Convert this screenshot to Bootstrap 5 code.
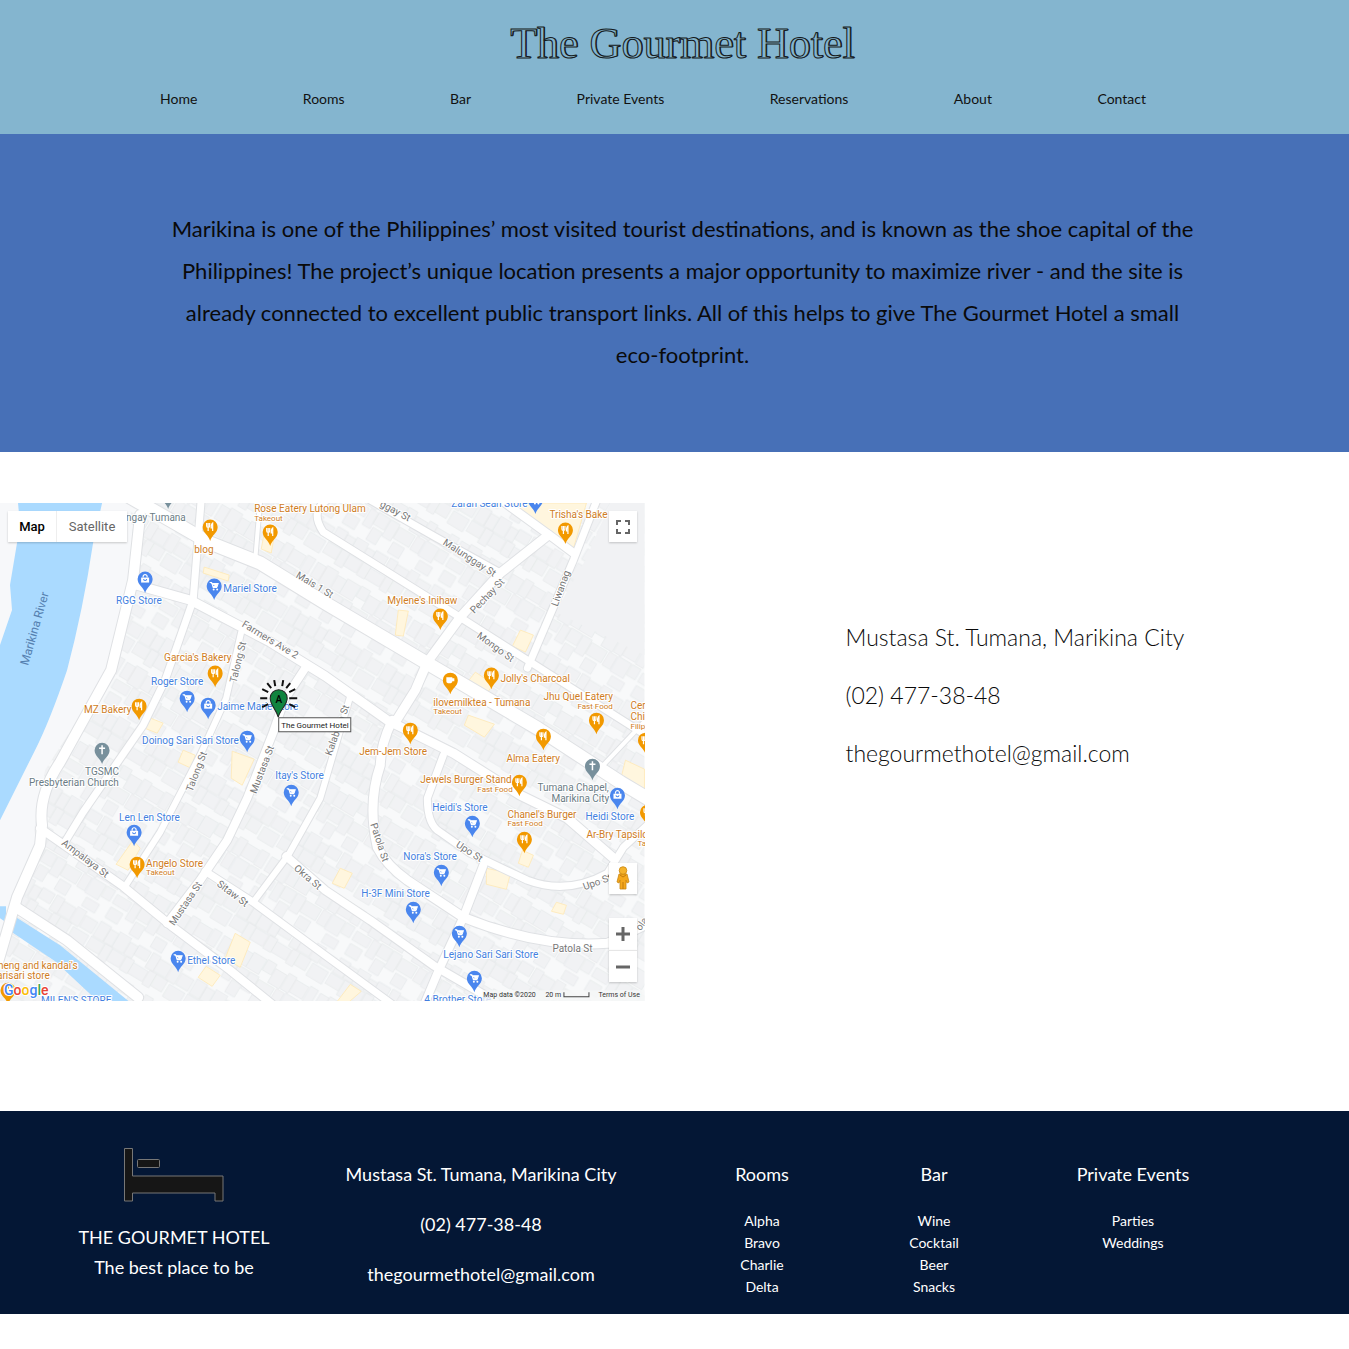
<!DOCTYPE html>
<html lang="en">
<head>
<meta charset="utf-8">
<meta name="viewport" content="width=device-width, initial-scale=1">
<title>The Gourmet Hotel - About</title>
<link href="https://cdn.jsdelivr.net/npm/bootstrap@5.3.0/dist/css/bootstrap.min.css" rel="stylesheet">
<style>
  body { font-family: Lato, "Open Sans", sans-serif; color: #0a0a0a; background: #fff; }
  .site-head { background: #84b5cf; height: 134px; padding-top: 16px; }
  .brand-title { font-family: "Liberation Serif", serif; font-size: 44px; line-height: 56px; color: #84b5cf; -webkit-text-stroke: 1px #151a20; text-shadow: 1px 0 #111; padding-left: 16px; }
  .main-nav { padding: 16px 203px 0 160px; }
  .main-nav a { color: #111; font-size: 14px; line-height: 22px; text-decoration: none; white-space: nowrap; }
  .intro { background: #4770b7; padding: 74px 144px 76px 160px; font-size: 22px; line-height: 42px; }
  .visit { padding: 51px 0 110px; }
  .map-side { padding-right: 30px; }
  .contact-side { padding: 113px 0 0 171px; font-size: 23px; line-height: 42px; font-weight: 300; }
  .contact-side a, .foot a { color: inherit; text-decoration: none; }
  .map-box > svg { display: block; width: 100%; height: auto; }
  .map-btn { position: absolute; display: flex; align-items: center; justify-content: center; background: #fff; border: 0; padding: 0; color: #666; box-shadow: 0 1px 2px rgba(0,0,0,.2); }
  .map-btn svg { width: 16px; height: 16px; }
  .map-types { position: absolute; left: 8px; top: 8px; display: flex; box-shadow: 0 1px 2px rgba(0,0,0,.2); }
  .map-types button { border: 0; background: #fff; height: 31px; font: 13px Roboto, sans-serif; color: #666; padding: 0; width: 70px; }
  .map-types button:first-child { width: 49px; font-weight: 500; color: #000; border-right: 1px solid #eee; }
  .btn-full { right: 8px; top: 8px; width: 28px; height: 31px; }
  .btn-man { right: 8px; bottom: 107px; width: 28px; height: 31px; }
  .map-btn.btn-man svg { width: 14px; height: 25px; }
  .btn-in { right: 8px; bottom: 51px; width: 28px; height: 32px; }
  .btn-out { right: 8px; bottom: 19px; width: 28px; height: 32px; border-top: 1px solid #e6e6e6; }
  .foot { background: #041735; color: #fff; height: 203px; padding: 37px 72px 0 31px; display: grid; grid-template-columns: 286fr 328fr 234fr 110fr 288fr; text-align: center; white-space: nowrap; font-size: 18px; line-height: 30px; font-weight: 400; }
  .foot .bed { width: 100px; height: 54px; display: block; margin: 0 auto 20px; }
  .foot h2 { font-size: 18px; line-height: 30px; font-weight: 400; margin: 0 0 21px; }
  .foot ul { font-size: 14px; line-height: 22px; }
  .foot-col { padding-top: 11px; }
  .foot-col p { margin: 0 0 20px; }
  .roads { fill: none; stroke-linejoin: round; stroke-linecap: round; }
  .r-edge { stroke: #dfe1e4; } .r-fill { stroke: #fff; }
  .lbl { font-family: Roboto, sans-serif; font-size: 10px; paint-order: stroke; stroke: #fff; stroke-width: 2px; stroke-linejoin: round; }
  .lbl .tiny { font-size: 8px; }
  .or { fill: #cf7d24; } .bl { fill: #447fe0; } .gy { fill: #6b7c85; } .st { fill: #777; }
  @media (max-width: 767px) {
    .foot { display: block; height: auto; padding: 24px; }
    .site-head { height: auto; } .main-nav { flex-wrap: wrap; gap: 12px; padding: 16px; }
    .intro, .contact-side { padding: 24px; } .map-side { padding-right: 0; }
  }
</style>
<script src="https://cdn.jsdelivr.net/npm/bootstrap@5.3.0/dist/js/bootstrap.bundle.min.js"></script>
</head>
<body>
<header class="site-head">
  <h1 class="brand-title text-center fw-normal m-0">The Gourmet Hotel</h1>
  <nav class="main-nav d-flex justify-content-between" aria-label="Main">
    <a href="#">Home</a><a href="#">Rooms</a><a href="#">Bar</a><a href="#">Private Events</a><a href="#">Reservations</a><a href="#">About</a><a href="#">Contact</a>
  </nav>
</header>
<main>
  <section class="intro text-center"><p class="m-0">Marikina is one of the Philippines’ most visited tourist destinations, and is known as the shoe capital of the Philippines! The project’s unique location presents a major opportunity to maximize river - and the site is already connected to excellent public transport links. All of this helps to give The Gourmet Hotel a small <span class="text-nowrap">eco-footprint.</span></p></section>
  <section class="visit row g-0">
    <div class="col-md-6 map-side">
      <div class="map-box position-relative">
        <svg viewBox="0 503 644 498" role="img" aria-label="Map around The Gourmet Hotel">
          <defs>
            <pattern id="lots" width="112" height="92" patternUnits="userSpaceOnUse" patternTransform="rotate(31)">
              <rect width="112" height="92" fill="#f8f9fa"/>
              <path d="M1 1h12v17H1zM13 3h10v15H13zM23 0h13v18H23zM37 4h9v14h-9zM46 2h14v11H46zM62 1h9v17h-9zM71 3h14v14H71zM86 0h10v18H86zM97 4h14v13H97zM0 19h16v12H0zM16 18h9v17h-9zM25 19h15v13H25zM41 18h9v15h-9zM50 20h17v12H50zM68 18h8v16h-8zM76 18h13v13H76zM92 20h18v14H92zM2 42h10v16H2zM12 40h13v20H12zM26 43h10v15H26zM36 41h15v17H36zM52 40h10v12H52zM63 44h13v16H63zM77 41h9v18h-9zM86 43h15v14H86zM102 41h9v17h-9zM1 62h17v10H1zM20 61h9v18h-9zM29 60h13v13H29zM43 60h10v19H43zM54 62h18v13H54zM74 61h9v15h-9zM84 60h15v17H84zM100 60h10v12h-10zM2 76h14v12H2zM31 76h11v14H31zM56 78h13v12H56zM88 80h15v10H88z" fill="#f1f2f4" stroke="#e7e9eb" stroke-width=".7"/>
            </pattern>
            <g id="drop"><path d="M0 14C-1.500 8-7.500 6-7.500 0a7.500 7.500 0 1 1 15 0C7.500 6 1.500 8 0 14z"/></g>
            <g id="food"><use href="#drop" fill="#f29900"/><path d="M-3.500-4v3q0 1.500 1.500 1.500T-.500-1v-3M-2-4v8M2.500 4v-8q-1.500 1-1.500 5h1.500" fill="none" stroke="#fff" stroke-width="1.200"/></g>
            <g id="cart"><use href="#drop" fill="#4a86ee"/><path d="M-4.500-3.500h2l1.500 5h4M-2-2.500h6l-1 3h-4z" fill="#fff" stroke="#fff"/><circle cx="-.5" cy="3.500" r="1" fill="#fff"/><circle cx="3" cy="3.500" r="1" fill="#fff"/></g>
            <g id="bag"><use href="#drop" fill="#4a86ee"/><path d="M-4-1.500h8v5h-8z" fill="#fff"/><path d="M-2-1.500v-1a2 2 0 0 1 4 0v1" fill="none" stroke="#fff" stroke-width="1.200"/><path d="M-1.500 0a1.500 1.500 0 0 0 3 0" fill="none" stroke="#4a86ee"/></g>
            <g id="cross"><use href="#drop" fill="#78909c"/><path d="M0-5v9M-3-2h6" stroke="#fff" stroke-width="1.500"/></g>
            <g id="net">
              <path d="M128 496L210 543 260 563 325 603 430 665 537 728 620 782 650 800" stroke-width="15"/>
              <path d="M133 584L190 600 270 642 325 676 387 720 453 753 520 795 567 818 612 857" stroke-width="11"/>
              <path d="M140 515L133 580 111 670 60 762Q38 795 42 825L40 845 17 897-2 962" stroke-width="12"/>
              <path d="M201 500L193 600 165 680 143 725 83 812 66 840" stroke-width="9"/>
              <path d="M40 828L123 886 173 927 230 970 272 1004" stroke-width="10"/>
              <path d="M241 632L226 698 200 755 160 832 125 886" stroke-width="8"/>
              <path d="M305 668L284 700 273 732 247 798 227 840 200 880 167 923" stroke-width="10"/>
              <path d="M350 696L337 740 320 798 288 855 253 902" stroke-width="8"/>
              <path d="M205 871L253 902 325 955 392 1004" stroke-width="9"/>
              <path d="M286 856L325 890 370 920 433 965 495 1001" stroke-width="10"/>
              <path d="M392 720Q380 745 380 765Q367 803 377 847Q386 865 407 880L463 917Q540 948 607 943L650 922" stroke-width="11"/>
              <path d="M443 755L427 798Q427 825 440 832L470 853 527 880Q567 895 607 873L623 847 650 822" stroke-width="9"/>
              <path d="M548 535L500 573 460 617 427 662 415 690 395 722" stroke-width="11"/>
              <path d="M370 500L435 537 500 573" stroke-width="9"/>
              <path d="M498 498L553 538 573 553" stroke-width="10"/>
              <path d="M598 496L573 560 527 668" stroke-width="9"/>
              <path d="M330 498Q308 510 323 532L453 613 527 660 650 738" stroke-width="9"/>
              <path d="M483 865L463 917 437 973 424 1004" stroke-width="10"/>
              <path d="M16 907L67 940 138 997" stroke-width="12"/>
              <path d="M650 715L600 768M260 500l-5 60" stroke-width="6"/>
            </g>
          </defs>
          <rect y="503" width="644" height="498" fill="url(#lots)"/>
          <path d="M0 503H130L136 590 100 685 45 770 34 830 40 850 0 955z" fill="#f7f8fa"/>
          <path d="M585 560L610 503H644V655L555 612z" fill="#f1f2f4"/>
          <path d="M18 503H102L93 543Q83 610 67 670 50 720 35 750L0 820V645L12 610 10 585 20 525z" fill="#aadaff"/>
          <path d="M0 906h6v16l-6-4zM16 917L60 945 130 1002H99L55 961 12 932z" fill="#aadaff"/>
          <path d="M500 503h86l-14 49-40-25zM204 567l25 8-1 6-25-8zM265 528l10 3-4 22-10-4zM133 840l7 8-12 22-12-6zM232 751l22 8-12 26-11-7zM486 868l24 5-4 16-20-5zM235 933l15 9-10 25-15-9zM522 850l11 5-5 12-10-4zM398 610l10 1-5 25-8-1zM475 672l18 12-7 10-22-8zM625 760l19 9v24l-25-9zM340 868l12 5-8 15-12-5zM148 717l15 6-6 10-15-6zM183 750l12 5-4 13-13-6zM468 715l26 9-10 13-20-12zM350 984l11 7-14 12-10-2zM520 630l13 5-8 17-13-6zM556 902l10 3-3 9-12-3zM206 966l14 9-8 11-14-9z" fill="#fff6de" stroke="#ffe9b4" stroke-width=".8"/>
          <g class="roads r-edge"><use href="#net"/></g>
          <g class="roads r-fill" id="roadtop"></g>
          <g class="lbl st">
            <text transform="translate(28 666) rotate(-74)" style="fill:#5580b0;font-size:12px;stroke:none">Marikina River</text>
            <text transform="translate(295 577) rotate(31)">Mais 1 St</text><text transform="translate(241 626) rotate(31)">Farmers Ave 2</text>
            <text transform="translate(379 506) rotate(28)">ggay St</text><text transform="translate(442 544) rotate(33)">Malunggay St</text>
            <text transform="translate(474 614) rotate(-46)">Pechay St</text><text transform="translate(557 607) rotate(-70)">Liwanag</text><text transform="translate(476 637) rotate(36)">Mongo St</text>
            <text transform="translate(236 683) rotate(-76)">Talong St</text><text transform="translate(192 792) rotate(-69)">Talong St</text><text transform="translate(256 794) rotate(-69)">Mustasa St</text><text transform="translate(331 756) rotate(-70)">Kalabasa St</text>
            <text transform="translate(61 844) rotate(37)">Ampalaya St</text><text transform="translate(174 926) rotate(-56)">Mustasa St</text><text transform="translate(216 885) rotate(37)">Sitaw St</text><text transform="translate(293 869) rotate(40)">Okra St</text>
            <text transform="translate(370 824) rotate(72)">Patola St</text><text transform="translate(455 846) rotate(33)">Upo St</text><text transform="translate(584 890) rotate(-20)">Upo St</text><text x="552" y="952">Patola St</text><text transform="translate(640 931) rotate(-55)">ola</text>
          </g>
          <g class="lbl gy"><text x="126" y="521">ngay Tumana</text><text x="85" y="775">TGSMC</text><text x="29" y="786">Presbyterian Church</text><text x="537" y="791">Tumana Chapel,</text><text x="551" y="802">Marikina City</text></g>
          <g class="lbl or">
            <text x="254" y="512">Rose Eatery Lutong Ulam</text><text class="tiny" x="254" y="521">Takeout</text><text x="194" y="553">blog</text><text x="549" y="518">Trisha's Bake</text><text x="387" y="604">Mylene's Inihaw</text><text x="164" y="661">Garcia's Bakery</text><text x="84" y="713">MZ Bakery</text>
            <text x="500" y="682">Jolly's Charcoal</text><text x="433" y="706">ilovemilktea - Tumana</text><text class="tiny" x="433" y="714">Takeout</text><text x="543" y="700">Jhu Quel Eatery</text><text class="tiny" x="577" y="709">Fast Food</text><text x="630" y="709">Cer</text><text x="630" y="720">Chi</text><text class="tiny" x="630" y="729">Filip</text>
            <text x="359" y="755">Jem-Jem Store</text><text x="506" y="762">Alma Eatery</text><text x="420" y="783">Jewels Burger Stand</text><text class="tiny" x="477" y="792">Fast Food</text><text x="507" y="818">Chanel's Burger</text><text class="tiny" x="507" y="826">Fast Food</text><text x="586" y="838">Ar-Bry Tapsilogan</text><text class="tiny" x="637" y="846">Ta</text>
            <text x="146" y="867">Angelo Store</text><text class="tiny" x="146" y="875">Takeout</text><text x="-2" y="969">heng and kandai's</text><text x="-3" y="979">arisari store</text>
          </g>
          <g class="lbl bl">
            <text x="451" y="507">Zaran Sean Store</text><text x="223" y="592">Mariel Store</text><text x="116" y="604">RGG Store</text><text x="151" y="685">Roger Store</text><text x="217" y="710">Jaime Marie Store</text><text x="142" y="744">Doinog Sari Sari Store</text><text x="275" y="779">Itay's Store</text><text x="119" y="821">Len Len Store</text><text x="432" y="811">Heidi's Store</text><text x="585" y="820">Heidi Store</text><text x="403" y="860">Nora's Store</text><text x="361" y="897">H-3F Mini Store</text><text x="443" y="958">Lejano Sari Sari Store</text><text x="187" y="964">Ethel Store</text><text x="424" y="1003">4 Brother Store</text><text x="41" y="1004">MILEN'S STORE</text>
          </g>
          <use href="#food" x="210" y="527"/><use href="#food" x="270" y="532"/><use href="#food" x="565" y="530"/><use href="#food" x="440" y="616"/><use href="#food" x="215" y="673"/><use href="#food" x="139" y="706"/><use href="#food" x="491" y="675"/><use href="#food" x="596" y="720"/><use href="#food" x="410" y="730"/><use href="#food" x="543" y="736"/><use href="#food" x="519" y="782"/><use href="#food" x="524" y="839"/><use href="#food" x="137" y="864"/><use href="#food" x="645" y="740"/><use href="#food" x="647" y="812"/><use href="#food" x="8" y="990"/>
          <g transform="translate(450 680)"><use href="#drop" fill="#f29900"/><path d="M-4-3h6v4q0 2-3 2t-3-2zM2-2h2v3H2" fill="#fff"/></g>
          <use href="#cart" x="214" y="586"/><use href="#cart" x="187" y="698"/><use href="#cart" x="247" y="738"/><use href="#cart" x="291" y="792"/><use href="#cart" x="472" y="823"/><use href="#cart" x="441" y="872"/><use href="#cart" x="413" y="909"/><use href="#cart" x="459" y="933"/><use href="#cart" x="474" y="978"/><use href="#cart" x="178" y="958"/><use href="#cart" x="535" y="500"/>
          <use href="#bag" x="145" y="579"/><use href="#bag" x="208" y="705"/><use href="#bag" x="134" y="832"/><use href="#bag" x="617" y="795"/>
          <use href="#cross" x="102" y="750"/><use href="#cross" x="592" y="766"/><use href="#cross" x="168" y="495"/>
          <g stroke="#111" stroke-width="2"><path d="M260 698h7M289 698h8M262 689l6 3M295 689l-6 3M267 683l4 5M290 683l-4 5M274 680l1 6M283 680l-1 6M262 707l6-3M295 707l-6-3"/></g>
          <path d="M278 717C276 709 270 705 270 698a8.500 8.500 0 0 1 17 0C287 705 280 709 278 717z" fill="#10843f" stroke="#222"/><text x="278.500" y="703" text-anchor="middle" font-family="Roboto" font-weight="500" font-size="10">A</text>
          <path d="M278.500 717.500h72v14h-72z" fill="#fff" stroke="#555"/><text x="281" y="728" font-family="Roboto" font-size="8" fill="#222">The Gourmet Hotel</text>
          <text x="4" y="995" font-family="Roboto" font-size="14" font-weight="500" stroke="#fff" stroke-width="2" paint-order="stroke"><tspan fill="#4285f4">G</tspan><tspan fill="#ea4335">o</tspan><tspan fill="#fbbc05">o</tspan><tspan fill="#4285f4">g</tspan><tspan fill="#34a853">l</tspan><tspan fill="#ea4335">e</tspan></text>
          <path d="M482 990h162v11H482z" fill="#f6f7f8" opacity=".8"/>
          <g font-family="Roboto" font-size="7" fill="#333"><text x="483" y="997">Map data ©2020</text><text x="545" y="997">20 m</text><text x="598" y="997">Terms of Use</text></g><path d="M563.500 992v4.500h25V992" fill="none" stroke="#444"/>
        </svg>
        <div class="map-types"><button type="button">Map</button><button type="button">Satellite</button></div>
        <button class="map-btn btn-full" type="button" aria-label="Full screen"><svg viewBox="0 0 16 16" fill="none" stroke="currentColor" stroke-width="2"><path d="M2 6V2h4M10 2h4v4M14 10v4h-4M6 14H2v-4"/></svg></button>
        <button class="map-btn btn-man" type="button" aria-label="Street view"><svg viewBox="0 0 14 25"><path d="M3 8h8l2 8-2 1-1-3v9H4v-9l-1 3-2-1z" fill="#f5a81c" stroke="#c98612" stroke-width=".8"/><circle cx="7" cy="4.500" r="3.800" fill="#f5b32c" stroke="#c98612" stroke-width=".8"/><path d="M7 16v7M4 9l3 2 3-2" stroke="#c27b0d" fill="none"/></svg></button>
        <button class="map-btn btn-in" type="button" aria-label="Zoom in"><svg viewBox="0 0 16 16"><path d="M8 1v14M1 8h14" stroke="currentColor" stroke-width="3"/></svg></button>
        <button class="map-btn btn-out" type="button" aria-label="Zoom out"><svg viewBox="0 0 16 16"><path d="M1 8h14" stroke="currentColor" stroke-width="3"/></svg></button>
      </div>
    </div>
    <address class="col-md-6 contact-side m-0">
      <p>Mustasa St. Tumana, Marikina City</p><p>(02) 477-38-48</p><p class="m-0"><a href="mailto:thegourmethotel@gmail.com">thegourmethotel@gmail.com</a></p>
    </address>
  </section>
</main>
<footer class="foot">
  <div><svg class="bed" viewBox="0 0 100 54" aria-hidden="true"><path d="M.500.500h8V28h90.500v25h-8v-8H8.500v8h-8z" fill="#161616" stroke="#777"/><rect x="13.500" y="11.500" width="22" height="8" rx="1" fill="#161616" stroke="#777"/></svg>
    <div>THE GOURMET HOTEL</div><div>The best place to be</div></div>
  <div class="foot-col"><p>Mustasa St. Tumana, Marikina City</p><p>(02) 477-38-48</p><p><a href="mailto:thegourmethotel@gmail.com">thegourmethotel@gmail.com</a></p></div>
  <div class="foot-col"><h2>Rooms</h2><ul class="list-unstyled m-0"><li><a href="#">Alpha</a></li><li><a href="#">Bravo</a></li><li><a href="#">Charlie</a></li><li><a href="#">Delta</a></li></ul></div>
  <div class="foot-col"><h2>Bar</h2><ul class="list-unstyled m-0"><li><a href="#">Wine</a></li><li><a href="#">Cocktail</a></li><li><a href="#">Beer</a></li><li><a href="#">Snacks</a></li></ul></div>
  <div class="foot-col"><h2>Private Events</h2><ul class="list-unstyled m-0"><li><a href="#">Parties</a></li><li><a href="#">Weddings</a></li></ul></div>
</footer>
<script>
  // Paint the road surface as a narrower copy of the casing.
  document.querySelectorAll('#net path').forEach(function (p) {
    var c = p.cloneNode();
    c.setAttribute('stroke-width', p.getAttribute('stroke-width') - 2);
    document.getElementById('roadtop').appendChild(c);
  });
</script>
</body>
</html>
